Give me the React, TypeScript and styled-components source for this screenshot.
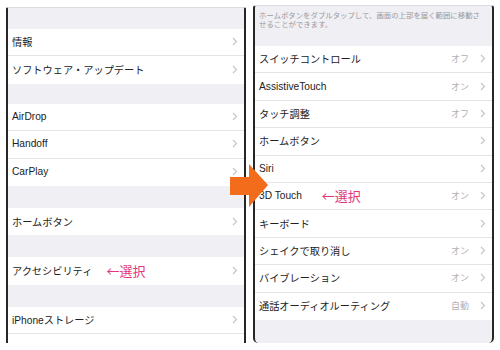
import * as React from 'react';
import styled, { createGlobalStyle } from 'styled-components';

const GlobalStyle = createGlobalStyle`
    body {
        margin: 0;
        background: #ffffff;
        font-family: 'Liberation Sans', 'Noto Sans CJK JP', sans-serif;
    }
`;

type Item = { label: string; value?: string; note?: number };

const leftGroups: Item[][] = [
    [{ label: '情報' }, { label: 'ソフトウェア・アップデート' }],
    [{ label: 'AirDrop' }, { label: 'Handoff' }, { label: 'CarPlay' }],
    [{ label: 'ホームボタン' }],
    [{ label: 'アクセシビリティ', note: 14 }],
    [{ label: 'iPhoneストレージ' }, { label: '' }],
];

const rightItems: Item[] = [
    { label: 'スイッチコントロール', value: 'オフ' },
    { label: 'AssistiveTouch', value: 'オン' },
    { label: 'タッチ調整', value: 'オフ' },
    { label: 'ホームボタン' },
    { label: 'Siri' },
    { label: '3D Touch', value: 'オン', note: 20 },
    { label: 'キーボード' },
    { label: 'シェイクで取り消し', value: 'オン' },
    { label: 'バイブレーション', value: 'オン' },
    { label: '通話オーディオルーティング', value: '自動' },
];

const Chevron = () => (
    <ChevronSvg width="6" height="9" viewBox="0 0 6 9">
        <polyline points="1,1 4.5,4.5 1,8" fill="none" stroke="#c4c4c9" strokeWidth="1.1" />
    </ChevronSvg>
);

const SettingRow = ({ item }: { item: Item }) => (
    <Row>
        <Label>
            {item.label}
            {item.note !== undefined && <Note $gap={item.note}>←選択</Note>}
        </Label>
        {item.value && <Value>{item.value}</Value>}
        {item.label && <Chevron />}
    </Row>
);

const App = () => (
    <Page>
        <GlobalStyle />
        <Panel $top={7} $height={336} $width={240}>
            <Gap $h={21} />
            {leftGroups.map((group, gi) => (
                <React.Fragment key={gi}>
                    {gi > 0 && <Gap $h={gi === 1 ? 20 : 22} />}
                    <Group>
                        {group.map((item, i) => (
                            <SettingRow key={i} item={item} />
                        ))}
                    </Group>
                </React.Fragment>
            ))}
        </Panel>
        <Panel $top={5} $height={338} $width={241} $rounded>
            <Header>
                ホームボタンをダブルタップして、画面の上部を届く範囲に移動させることができます。
            </Header>
            <Group>
                {rightItems.map((item, i) => (
                    <SettingRow key={i} item={item} />
                ))}
            </Group>
        </Panel>
        <Arrow width="40" height="46" viewBox="0 0 40 46">
            <polygon points="1,14 20,14 20,1 39,22 20,44 20,32 1,32" fill="#f36c1c" />
        </Arrow>
    </Page>
);

const Page = styled.div`
    position: relative;
    display: flex;
    align-items: flex-start;
    gap: 7px;
    padding-left: 6px;
    width: 500px;
    height: 350px;
    box-sizing: border-box;
    overflow: hidden;
`;

const Panel = styled.div<{ $top: number; $height: number; $width: number; $rounded?: boolean }>`
    margin-top: ${({ $top }) => $top}px;
    width: ${({ $width }) => $width}px;
    height: ${({ $height }) => $height}px;
    box-sizing: border-box;
    display: flex;
    flex-direction: column;
    background: #efeff4;
    border-left: 2px solid #262626;
    border-right: 2px solid #262626;
    border-top: 1px solid #dcdce0;
    border-radius: ${({ $rounded }) => ($rounded ? '3px 3px 5px 5px' : '2px 2px 0 0')};
    overflow: hidden;
`;

const Gap = styled.div<{ $h: number }>`
    height: ${({ $h }) => $h}px;
    flex-shrink: 0;
`;

const Group = styled.div`
    background: #ffffff;
    flex-shrink: 0;
`;

const Header = styled.div`
    height: 40px;
    width: 226px;
    flex-shrink: 0;
    box-sizing: border-box;
    padding: 5px 0 0 4px;
    font-size: 7.4px;
    line-height: 8.5px;
    color: #9a9aa0;
    font-family: 'Noto Sans CJK JP', sans-serif;
`;

const Row = styled.div`
    display: flex;
    align-items: center;
    height: 27.4px;
    box-sizing: border-box;
    padding: 0 6px 1px 4px;
    border-bottom: 1px solid #e4e4e8;
    &:last-child {
        border-bottom: none;
    }
`;

const Label = styled.div`
    flex: 1;
    display: flex;
    align-items: center;
    font-size: 10.2px;
    color: #222222;
    white-space: nowrap;
`;

const Note = styled.span<{ $gap: number }>`
    margin-left: ${({ $gap }) => $gap}px;
    font-size: 13px;
    color: #e3377c;
    font-family: 'Noto Sans CJK JP', sans-serif;
`;

const Value = styled.span`
    font-size: 9px;
    color: #b0b0b5;
    margin-right: 11px;
    font-family: 'Noto Sans CJK JP', sans-serif;
`;

const ChevronSvg = styled.svg`
    flex-shrink: 0;
`;

const Arrow = styled.svg`
    position: absolute;
    left: 229px;
    top: 163px;
`;

export default App;
